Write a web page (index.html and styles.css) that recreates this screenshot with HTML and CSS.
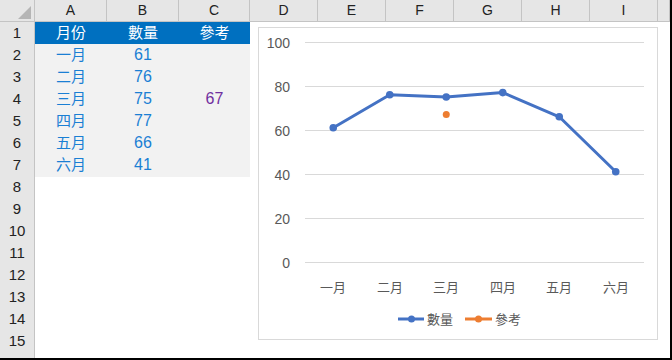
FILE: index.html
```html
<!DOCTYPE html>
<html lang="zh-Hant">
<head>
    <meta charset="UTF-8">
    <title>數量 參考</title>
    <link rel="stylesheet" href="styles.css">
</head>
<body>

<div class="sheet">
    <div class="row col-heads">
        <div class="corner"><span class="tri"></span></div>
        <div class="ch">A</div>
        <div class="ch">B</div>
        <div class="ch">C</div>
        <div class="ch">D</div>
        <div class="ch">E</div>
        <div class="ch">F</div>
        <div class="ch">G</div>
        <div class="ch">H</div>
        <div class="ch">I</div>
        <div class="ch"></div>
    </div>

    <div class="row"><div class="rh">1</div><div class="c head">月份</div><div class="c head">數量</div><div class="c head">參考</div></div>
    <div class="row"><div class="rh">2</div><div class="c fill">一月</div><div class="c fill num">61</div><div class="c fill"></div></div>
    <div class="row"><div class="rh">3</div><div class="c fill">二月</div><div class="c fill num">76</div><div class="c fill"></div></div>
    <div class="row"><div class="rh">4</div><div class="c fill">三月</div><div class="c fill num">75</div><div class="c fill num ref">67</div></div>
    <div class="row"><div class="rh">5</div><div class="c fill">四月</div><div class="c fill num">77</div><div class="c fill"></div></div>
    <div class="row"><div class="rh">6</div><div class="c fill">五月</div><div class="c fill num">66</div><div class="c fill"></div></div>
    <div class="row"><div class="rh">7</div><div class="c fill">六月</div><div class="c fill num">41</div><div class="c fill"></div></div>
    <div class="row"><div class="rh">8</div></div>
    <div class="row"><div class="rh">9</div></div>
    <div class="row"><div class="rh">10</div></div>
    <div class="row"><div class="rh">11</div></div>
    <div class="row"><div class="rh">12</div></div>
    <div class="row"><div class="rh">13</div></div>
    <div class="row"><div class="rh">14</div></div>
    <div class="row"><div class="rh">15</div></div>
    <div class="row"><div class="rh"></div></div>

    <!-- floating chart object -->
    <div class="chart">
        <svg width="398" height="311" viewBox="0 0 398 311">
            <g class="grid">
                <line x1="46" y1="14.5" x2="385" y2="14.5"/>
                <line x1="46" y1="58.5" x2="385" y2="58.5"/>
                <line x1="46" y1="102.5" x2="385" y2="102.5"/>
                <line x1="46" y1="146.5" x2="385" y2="146.5"/>
                <line x1="46" y1="190.5" x2="385" y2="190.5"/>
                <line x1="46" y1="234.5" x2="385" y2="234.5"/>
            </g>
            <g class="ylab">
                <text x="31" y="19.5">100</text>
                <text x="31" y="63.5">80</text>
                <text x="31" y="107.5">60</text>
                <text x="31" y="151.5">40</text>
                <text x="31" y="195.5">20</text>
                <text x="31" y="239.5">0</text>
            </g>
            <g class="xlab">
                <text x="74" y="264">一月</text>
                <text x="131" y="264">二月</text>
                <text x="187" y="264">三月</text>
                <text x="244" y="264">四月</text>
                <text x="300" y="264">五月</text>
                <text x="357" y="264">六月</text>
            </g>
            <polyline class="qty" points="74.25,99.8 130.75,66.8 187.25,69 243.75,64.6 300.25,88.8 356.75,143.8"/>
            <g class="qty-dot">
                <circle cx="74.25" cy="99.8" r="3.8"/>
                <circle cx="130.75" cy="66.8" r="3.8"/>
                <circle cx="187.25" cy="69" r="3.8"/>
                <circle cx="243.75" cy="64.6" r="3.8"/>
                <circle cx="300.25" cy="88.8" r="3.8"/>
                <circle cx="356.75" cy="143.8" r="3.8"/>
            </g>
            <circle class="ref-dot" cx="187.25" cy="86.6" r="3.5"/>

            <g class="legend">
                <line class="qty" x1="139" y1="291" x2="165" y2="291"/>
                <circle class="qty-mark" cx="152.5" cy="291" r="3.5"/>
                <text x="168" y="296">數量</text>
                <line class="ref-line" x1="206" y1="291" x2="233" y2="291"/>
                <circle class="ref-dot" cx="219.5" cy="291" r="3.5"/>
                <text x="236" y="296">參考</text>
            </g>
        </svg>
    </div>
</div>

</body>
</html>
```

FILE: styles.css
```css
body {
    margin: 0;
    padding: 0;
    background-color: white;
    font-family: "Liberation Sans", "Noto Sans CJK TC", sans-serif;
}
.sheet {
    position: relative;
    width: 670px;
    height: 358px;
    border-right: 2px solid #000;
    border-bottom: 2px solid #000;
    overflow: hidden;
    background-color: white;
}
.row {
    display: grid;
    grid-template-columns: 35px 72px 72px 71px repeat(6, 68px) 12px;
    height: 22px;
}
.col-heads .ch,
.corner {
    box-sizing: border-box;
    background-color: #e6e6e6;
    border-right: 1px solid #c4c4c4;
    border-bottom: 1px solid #c4c4c4;
    font-size: 14px;
    line-height: 21px;
    text-align: center;
    color: #222;
}
.corner {
    position: relative;
}
.tri {
    position: absolute;
    left: 18px;
    top: 6px;
    width: 0;
    height: 0;
    border-left: 13px solid transparent;
    border-bottom: 13px solid #b5b5b5;
}
.rh {
    box-sizing: border-box;
    background-color: #e6e6e6;
    border-right: 1px solid #c4c4c4;
    border-bottom: 1px solid #c4c4c4;
    font-size: 15px;
    line-height: 22px;
    text-align: center;
    color: #222;
}
.c {
    font-size: 15px;
    line-height: 22px;
    text-align: center;
    color: #1a7fd4;
}
.c.num {
    font-size: 16px;
}
.c.head {
    background-color: #0070c0;
    color: white;
}
.c.fill {
    background-color: #f2f2f2;
}
.c.ref {
    color: #7030a0;
}
.chart {
    position: absolute;
    left: 258px;
    top: 27px;
    width: 398px;
    height: 311px;
    border: 1px solid #d9d9d9;
    background-color: white;
}
.chart svg {
    display: block;
}
.grid line {
    stroke: #d9d9d9;
    stroke-width: 1;
}
.ylab text {
    font-size: 14px;
    fill: #595959;
    text-anchor: end;
}
.xlab text {
    font-size: 13px;
    fill: #595959;
    text-anchor: middle;
    font-family: "Noto Sans CJK TC", sans-serif;
}
.legend text {
    font-size: 13px;
    fill: #595959;
    font-family: "Noto Sans CJK TC", sans-serif;
}
.qty {
    fill: none;
    stroke: #4472c4;
    stroke-width: 3;
    stroke-linejoin: round;
}
.qty-dot circle,
.qty-mark {
    fill: #4472c4;
}
.ref-dot {
    fill: #ed7d31;
}
.ref-line {
    stroke: #ed7d31;
    stroke-width: 3;
}
```
